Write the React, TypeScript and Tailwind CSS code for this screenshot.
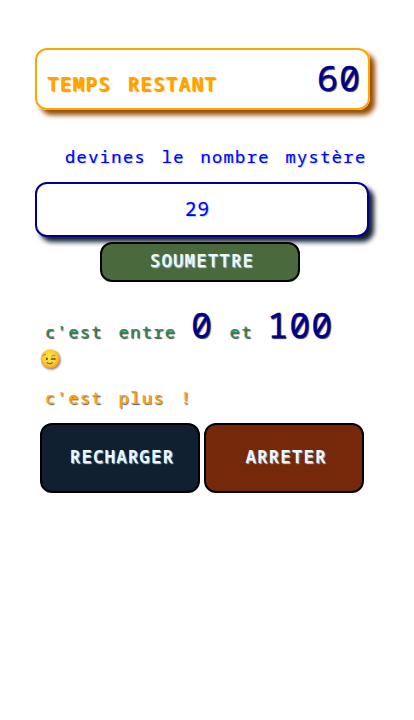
function WinkFace() {
  return (
    <svg
      viewBox="0 0 20 20"
      className="block h-5 w-5 drop-shadow-[1px_1px_1px_rgba(0,0,0,0.55)]"
      role="img"
      aria-label="clin d'œil"
    >
      <defs>
        <radialGradient id="face" cx="48%" cy="42%" r="56%">
          <stop offset="0" stopColor="#ffe94a" />
          <stop offset="0.6" stopColor="#ffd238" />
          <stop offset="1" stopColor="#f3a01c" />
        </radialGradient>
      </defs>
      <circle cx="10.2" cy="10" r="9.4" fill="url(#face)" />
      <ellipse cx="6.9" cy="9.9" rx="0.9" ry="1.4" fill="#6b3c05" />
      <path d="M11 9.9q1.4-1.3 4.4-.3M11.4 10.3q2 .5 3.6.2" fill="none" stroke="#6b3c05" strokeWidth="0.8" strokeLinecap="round" />
      <path d="M2.8 6.9q1-1.7 2.8-1.8M11.6 7.2q1.6-1 3.3-.8" fill="none" stroke="#9a6510" strokeWidth="0.8" strokeLinecap="round" />
      <path d="M7 13.9q2.6 2 5.4.1" fill="none" stroke="#6b3c05" strokeWidth="1" strokeLinecap="round" />
    </svg>
  );
}

const big =
  'text-[35px] font-normal tracking-[1px] text-[#00008b] [text-shadow:1px_1px_1px_#444] [-webkit-text-stroke:0.3px_#00008b]';
const button =
  'rounded-xl border-2 border-black text-[17.4px] font-semibold tracking-[1.15px] text-[#f5f5f5] [text-shadow:1px_1px_1px_lightblue]';

export default function App() {
  return (
    <main className="h-[720px] w-[414px] overflow-hidden bg-white pt-12 font-['Noto_Sans_Mono','DejaVu_Sans_Mono',monospace] [word-spacing:4px]">
      <header className="ml-[35px] flex h-[62px] w-[335px] items-baseline justify-between rounded-xl border-2 border-[#ffa500] pr-[7px] pl-[10px] shadow-[5px_5px_5px_#964b00]">
        <span className="text-[19.2px] font-semibold tracking-[1.25px] text-[#ffa500] [text-shadow:1px_1px_1px_#ff8c00]">
          TEMPS RESTANT
        </span>
        <span className={`${big} leading-[56px]`}>60</span>
      </header>

      <label className="mt-[33px] ml-[65px] block h-[39px] text-[17px] leading-[28px] tracking-[1.38px] whitespace-nowrap text-[#0000ff] [text-shadow:1px_1px_1px_lightblue] [-webkit-text-stroke:0.2px_#0000ff]">
        devines le nombre mystère
      </label>
      <input
        className="ml-[35px] block h-[55px] w-[334px] rounded-xl border-2 border-[#00008b] bg-white pr-[9px] pb-0.5 text-center text-[19.2px] tracking-[1px] text-[#0000ff] shadow-[5px_5px_5px_#102030] outline-none [text-shadow:1px_1px_1px_lightblue] [-webkit-text-stroke:0.2px_#0000ff]"
        defaultValue="29"
      />
      <button className={`${button} relative mt-[5px] ml-[100px] block h-10 w-[200px] bg-[#4a693c] pb-[3px] pl-1`}>
        SOUMETTRE
      </button>

      <section className="mt-[19px] ml-10 h-[122px] text-[17px] tracking-[1.38px]">
        <p className="h-[48px] pl-[5px] leading-[48px] whitespace-nowrap text-[#2e8b57] [text-shadow:1px_1px_1px_#444] [-webkit-text-stroke:0.2px_#3a7a5a]">
          c'est entre <span className={`${big} -ml-px mr-px`}>0</span> et <span className={`${big} -ml-px`}>100</span>
        </p>
        <WinkFace />
        <p className="mt-[15px] pl-[5px] leading-[28px] text-[#ffa500] [text-shadow:1px_1px_1px_#555] [-webkit-text-stroke:0.2px_#ffa500]">
          c'est plus !
        </p>
      </section>

      <div className="ml-10 flex gap-1">
        <button className={`${button} h-[70px] w-40 bg-[#102030] pb-[3px] pl-1`}>RECHARGER</button>
        <button className={`${button} h-[70px] w-40 bg-[#76290a] pb-[3px] pl-1`}>ARRETER</button>
      </div>
    </main>
  );
}
